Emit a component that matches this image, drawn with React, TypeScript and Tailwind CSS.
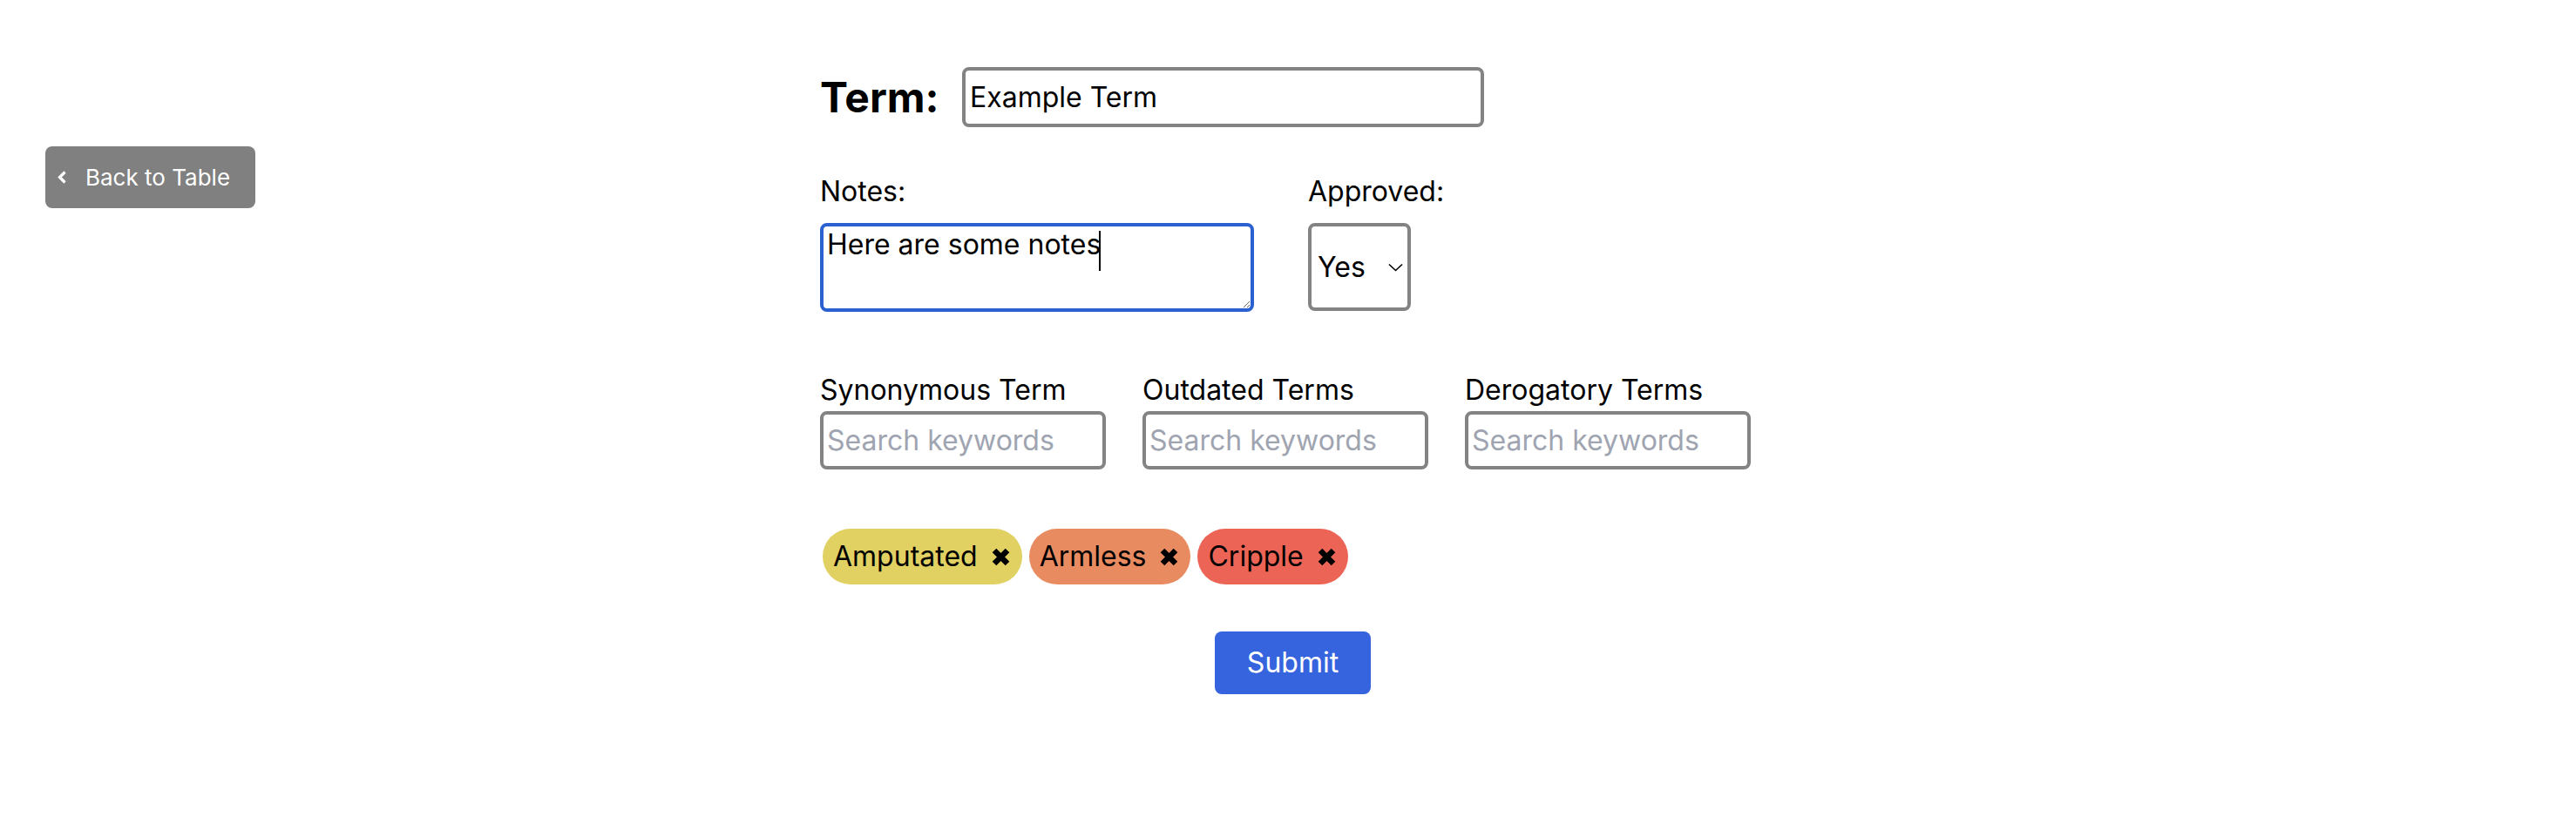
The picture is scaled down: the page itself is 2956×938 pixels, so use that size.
import React, { useEffect, useRef } from "react";

const tags = [
  { label: "Amputated", bg: "bg-[#e1d062]" },
  { label: "Armless", bg: "bg-[#e98b60]" },
  { label: "Cripple", bg: "bg-[#ec6456]" },
];

function HeavyX() {
  return (
    <svg width="23" height="23" viewBox="0 0 23 23" className="ml-[15px]">
      <path d="M4 4 L19 19 M19 4 L4 19" stroke="black" strokeWidth="6.5" strokeLinecap="butt" />
    </svg>
  );
}

function Tag({ label, bg }: { label: string; bg: string }) {
  return (
    <div className={`flex h-[64px] items-center rounded-full pl-[12px] pr-[13px] ${bg}`}>
      <span className="text-[32px] leading-[38px]">{label}</span>
      <HeavyX />
    </div>
  );
}

function SearchField({ label }: { label: string }) {
  return (
    <div className="flex w-[328px] flex-col">
      <label className="whitespace-nowrap text-[32px] leading-[38px]">{label}</label>
      <input
        className="mt-[5px] h-[67px] w-[328px] rounded-[8px] border-4 border-[#838383] px-[4px] text-[32px] outline-none placeholder:text-[#9fa4b1]"
        placeholder="Search keywords"
      />
    </div>
  );
}

export default function App() {
  const taRef = useRef<HTMLTextAreaElement>(null);
  useEffect(() => {
    const t = taRef.current;
    if (t) {
      t.focus();
      const n = t.value.length;
      t.setSelectionRange(n, n);
    }
  }, []);

  return (
    <div className="flex min-h-[938px] bg-white font-['Inter',sans-serif] text-black">
      <div className="w-[941px] shrink-0 pl-[52px] pt-[168px]">
        <button className="flex h-[71px] w-[241px] items-center rounded-[8px] bg-[#808080] pl-[13px] text-[26px] text-white">
          <svg width="12" height="17" viewBox="0 0 12 17" fill="none">
            <path d="M9.5 2.5 L3.5 8.5 L9.5 14.5" stroke="white" strokeWidth="3.2" />
          </svg>
          <span className="ml-[21px]">Back to Table</span>
        </button>
      </div>

      <form className="flex w-[1085px] flex-col pt-[77px]" onSubmit={(e) => e.preventDefault()}>
        <div className="flex h-[69px] items-center">
          <span className="w-[163px] text-[48px] font-bold leading-none">Term:</span>
          <input
            className="h-[69px] w-[599px] rounded-[8px] border-4 border-[#838383] px-[5px] text-[32px] outline-none"
            defaultValue="Example Term"
          />
        </div>

        <div className="mt-[55px] flex">
          <div className="flex w-[498px] flex-col">
            <label className="text-[32px] leading-[38px]">Notes:</label>
            <div className="relative mt-[17px] h-[102px] w-[498px]">
              <textarea
                ref={taRef}
                className="h-full w-full rounded-[8px] border-4 border-[#2b60d0] px-[4px] pt-[2px] text-[32px] leading-[38px] caret-transparent outline-none"
                defaultValue="Here are some notes"
              />
              <span className="pointer-events-none absolute left-[320px] top-[9px] h-[46px] w-[2px] bg-black" />
            </div>
          </div>
          <div className="ml-[62px] flex flex-col">
            <label className="text-[32px] leading-[38px]">Approved:</label>
            <div className="relative mt-[17px] h-[101px] w-[118px]">
              <select className="h-full w-full appearance-none rounded-[8px] border-4 border-[#838383] bg-white pl-[7px] text-[32px] outline-none">
                <option>Yes</option>
                <option>No</option>
              </select>
              <svg
                className="pointer-events-none absolute left-[92px] top-[46px]"
                width="17"
                height="10"
                viewBox="0 0 17 10"
                fill="none"
              >
                <path d="M1 1.5 L8.5 8.5 L16 1.5" stroke="black" strokeWidth="1.6" />
              </svg>
            </div>
          </div>
        </div>

        <div className="mt-[71px] flex gap-[42px]">
          <SearchField label="Synonymous Term" />
          <SearchField label="Outdated Terms" />
          <SearchField label="Derogatory Terms" />
        </div>

        <div className="mt-[68px] flex gap-[8px] pl-[3px]">
          {tags.map((t) => (
            <Tag key={t.label} label={t.label} bg={t.bg} />
          ))}
        </div>

        <button
          type="submit"
          className="mt-[54px] h-[72px] self-center rounded-[8px] bg-[#3564de] px-[37px] text-[32px] text-white"
        >
          Submit
        </button>
      </form>
    </div>
  );
}
